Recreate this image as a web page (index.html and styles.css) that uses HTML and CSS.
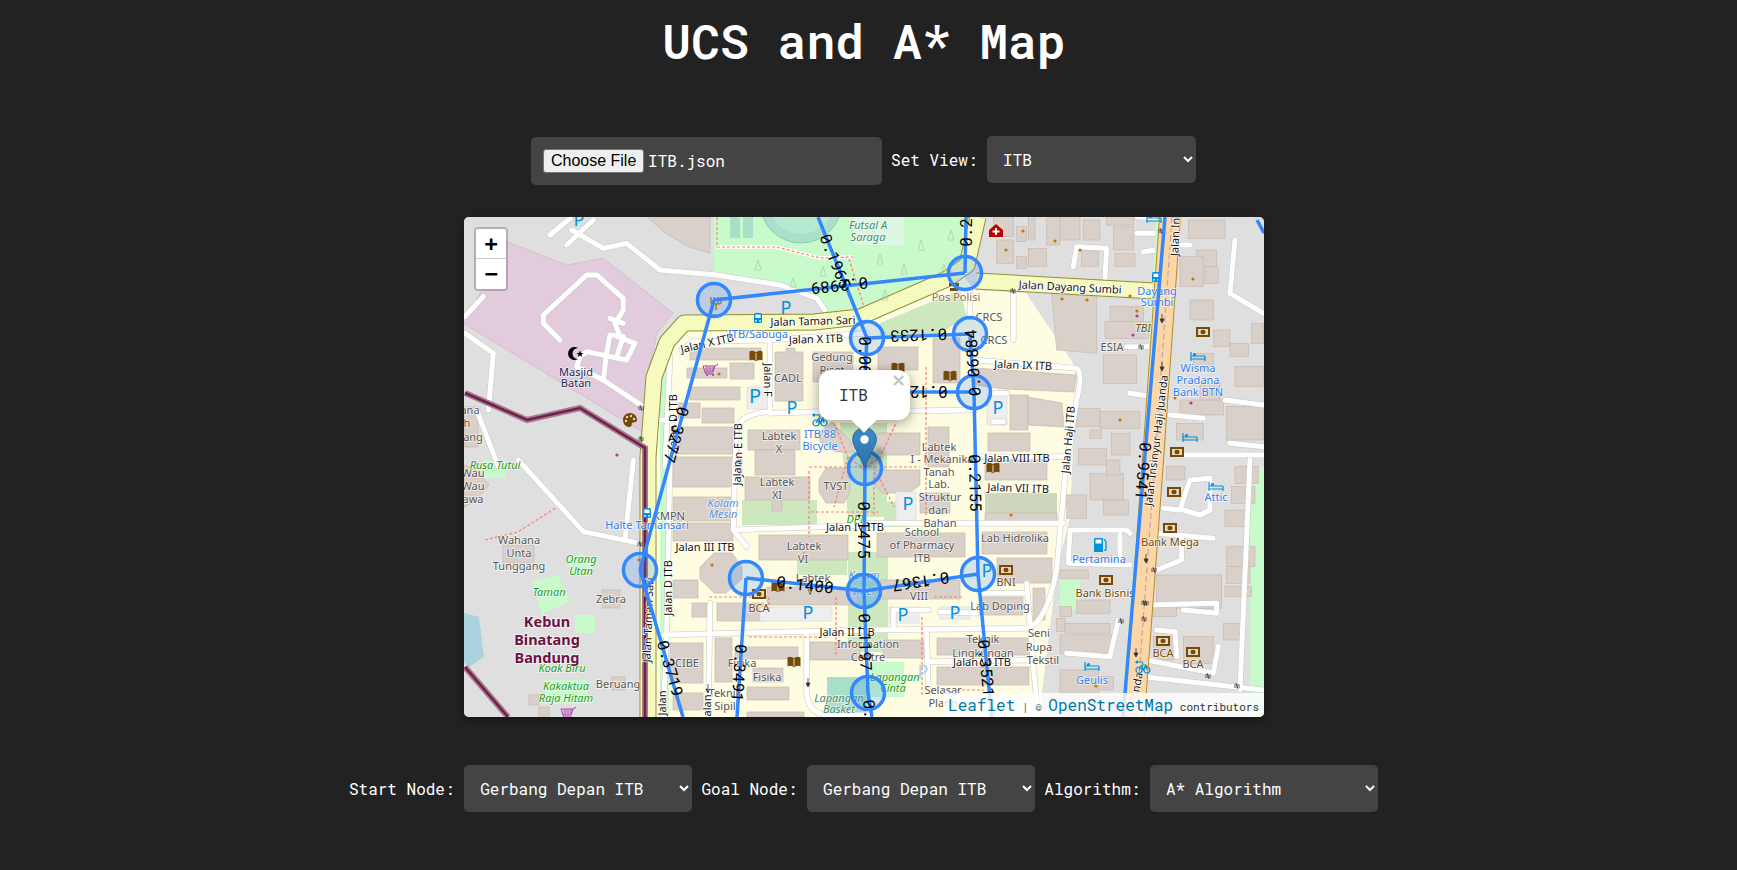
FILE: index.html
```html
<!DOCTYPE html>
<html lang="en">
<head>
<meta charset="utf-8">
<title>UCS and A* Map</title>
<link rel="stylesheet" href="styles.css">
</head>
<body>
<main class="page">
  <h1 class="title">UCS and A* Map</h1>

  <section class="row row-top">
    <div class="file-box"><button class="file-btn" type="button">Choose File</button><span class="file-name">ITB.json</span></div>
    <label class="lbl-field" for="view">Set View:</label>
    <select id="view" class="sel sel-view"><option>ITB</option><option>Alun-Alun</option></select>
  </section>

  <section class="map">
    <svg class="map-svg" viewBox="0 0 800 500" width="800" height="500" xmlns="http://www.w3.org/2000/svg">
      <defs>
        <g id="i-book"><path d="M-6.5 -4.5 C-4 -6 -1.5 -5 0 -3.5 C1.5 -5 4 -6 6.5 -4.5 V4.5 C4 3 1.5 4 0 5.5 C-1.5 4 -4 3 -6.5 4.5Z" class="ic-brown"/><path d="M0 -3V4.5" class="ic-line"/></g>
        <g id="i-bank"><rect x="-7" y="-5" width="14" height="10" class="ic-brown"/><rect x="-5" y="-3" width="10" height="6" class="ic-tan"/><ellipse rx="2.6" ry="2.2" class="ic-brown"/></g>
        <g id="i-bed"><path d="M-7 -4V5M7 0V5M-7 3H7M-7 -0H7" class="ic-bed"/><circle cx="-3.5" cy="-1.5" r="1.6" class="ic-blue"/></g>
        <g id="i-bus"><rect x="-4" y="-5" width="8" height="10" rx="1.5" class="ic-blue"/><rect x="-2.6" y="-3.4" width="5.2" height="3.4" class="ic-white"/><circle cx="-2" cy="2.8" r=".9" class="ic-white"/><circle cx="2" cy="2.8" r=".9" class="ic-white"/></g>
        <g id="i-bike"><circle cx="-4" cy="3" r="3" class="ic-bed"/><circle cx="4" cy="3" r="3" class="ic-bed"/><path d="M-4 3L-1 -2H3L4 3M-1 -2L0 3L3 -2M-4 -5H-1L0 -3" class="ic-bed"/><circle cx="-6" cy="-5" r="1.6" class="ic-blue"/></g>
        <g id="i-cart"><path d="M-7 -4H5L3 2H-5ZM-5 2L-4 4H4M5 -4L8 -6" class="ic-cart"/><path d="M-5 -2H4M-5 0H3.5M-3 -4V2M0 -4V2M3 -4V2" class="ic-cart-t"/><circle cx="-3" cy="5" r="1" class="ic-purple"/><circle cx="3" cy="5" r="1" class="ic-purple"/></g>
        <g id="i-pal"><path d="M0 -7C5 -7 7 -3 7 0C7 3 3 2 2 3C1 4 3 7 -1 7C-5 7 -7 3 -7 0C-7 -4 -4 -7 0 -7Z" class="ic-palette"/><circle cx="-3" cy="-3" r="1.2" class="ic-tan"/><circle cx="1" cy="-4" r="1.2" class="ic-tan"/><circle cx="4" cy="-1" r="1.2" class="ic-tan"/><circle cx="-4" cy="1" r="1.2" class="ic-tan"/></g>
        <g id="i-arrow"><path d="M0 -5V3M-2 0L0 4L2 0Z" class="ic-arrow"/></g>
        <g id="i-bar"><path d="M-3 -1H3M-3 1H3M-1 -3L1 3" class="ic-arrow"/></g>
        <g id="roads1" transform="translate(-4,-7) scale(.3333)">
          <path d="M15 370L100 430L85 600M50 600L115 770M15 320L70 260"/>
          <path d="M270 75L330 25M320 105L400 30M335 60L430 115L500 100L600 180L770 195L960 225L1070 265L1095 300"/>
          <path d="M300 390L250 340V315L380 195H410L490 265V300L465 340L480 380M450 325L490 340M460 375L525 400L500 450L380 425L360 440L350 470M430 510L440 430L450 375M490 380L470 440M350 470L430 510L550 590"/>
          <path d="M665 420L700 395L930 390L1220 370M930 390V610L1230 600M825 770L830 660Q840 610 930 605M630 440L615 770M600 630H640"/>
        </g>
        <g id="roads2" transform="translate(396,-7) scale(.3333)">
          <path d="M640 170L650 110L740 115L735 205M850 125L890 120M830 70H890M830 20L900 25"/>
          <path d="M460 245V390M345 450L650 475Q670 490 650 570L620 770M810 550L880 560M930 615L1030 625M800 410H875"/>
          <path d="M0 605L345 600M400 550H440M400 635H430M345 740H620M330 240V320"/>
          <path d="M1125 90L1110 250L1210 310M965 105H990M1095 570L1210 585M1110 700L1210 710M950 735H1210"/>
        </g>
        <g id="roads3" transform="translate(-4,243) scale(.3333)">
          <path d="M175 0L370 215L540 250M520 0L495 240M630 0L620 520L610 770M610 525L1230 510M825 0L820 210L1230 195M750 430L745 770M1040 525V700Q1045 760 1100 765H1230M820 210L860 260"/>
        </g>
        <g id="roads4" transform="translate(396,243) scale(.3333)">
          <path d="M0 190H610M0 510L500 505Q560 490 590 330L620 0"/>
          <path d="M200 520L205 690M500 370L520 620L535 770M360 400H490M100 500V450H205M240 455L350 460M205 605L520 600"/>
          <path d="M630 210H800L810 220M630 210L625 310L810 315M780 225V310M890 220L1060 235M965 225V300L890 330M910 145L960 150L990 60L1050 55V150L1020 165L970 150"/>
          <path d="M860 435L1070 430V460L970 450M620 580L750 590L775 480M890 510L945 515L950 590M860 600L1060 640L1075 560M850 650L1212 690M1170 0L1140 690"/>
        </g>
      </defs>

      <!-- land use -->
      <rect class="land" width="800" height="500"/>
      <polygon class="pink" points="0,107 43,25 103,48 139,41 209,96 193,116 183,160 179,215"/>
      <polygon class="water" points="0,396 15,400 20,440 5,450 0,445"/>
      <polygon class="green" points="250,0 510,0 500,45 478,62 400,95 360,95 353,83 316,68 253,58 250,55"/>
      <polygon class="campus" points="186,230 185,160 196,125 212,103 360,100 400,95 500,60 510,73 562,76 609,146 612,160 606,300 593,353 575,500 186,500"/>
      <rect class="green" x="196" y="130" width="9" height="370"/>
      <polygon class="meadow" points="416,106 496,73 503,100 470,120 416,120"/>
      <polygon class="meadow" points="376,206 423,206 423,300 384,300"/>
      <rect class="meadow" x="278" y="283" width="75" height="25"/>
      <rect class="meadow" x="333" y="343" width="50" height="15"/>
      <rect class="meadow" x="384" y="335" width="40" height="100"/>
      <rect class="meadow" x="420" y="285" width="25" height="25"/>
      <ellipse class="pond" cx="400" cy="374" rx="18" ry="15"/>
      <rect class="green" x="786" y="250" width="14" height="250"/>
      <rect class="green" x="596" y="363" width="20" height="30"/>
      <rect class="land-green" x="363" y="460" width="40" height="35"/>
      <polygon class="green" points="405,445 440,445 440,480 405,480"/>
      <polygon class="green" points="68,364 94,358 106,385 78,397"/>
      <polygon class="green" points="103,343 118,336 133,347 120,360 107,357"/>
      <rect class="green" x="111" y="398" width="20" height="18"/>
      <rect class="green" x="81" y="463" width="42" height="24"/>
      <rect class="green" x="20" y="243" width="22" height="18"/>
      <polygon class="pitch-soft" points="390,0 440,0 440,28 390,28"/>
      <circle class="track" cx="337" cy="-15" r="41"/>
      <circle class="field" cx="337" cy="-15" r="32"/>
      <rect class="land-green" x="266" y="0" width="10" height="21"/>
      <rect class="land-green" x="279" y="0" width="10" height="21"/>

      <!-- buildings -->
      <g class="bld">
        <polygon points="183,0 246,0 246,36 225,30 200,15"/>
        <polygon points="226,131 297,131 297,143 226,143"/>
        <rect x="223" y="151" width="40" height="10"/><rect x="266" y="146" width="24" height="16"/>
        <polygon points="311,135 322,135 322,131 331,131 331,135 339,135 339,184 311,184"/>
        <rect x="226" y="170" width="50" height="13"/><rect x="214" y="186" width="22" height="15"/><rect x="238" y="191" width="32" height="15"/>
        <rect x="209" y="210" width="60" height="27"/><rect x="209" y="240" width="60" height="30"/>
        <rect x="209" y="280" width="60" height="24"/><rect x="209" y="306" width="60" height="18"/>
        <rect x="349" y="135" width="40" height="30"/><rect x="414" y="130" width="40" height="23"/><rect x="469" y="121" width="27" height="45"/>
        <rect x="284" y="213" width="52" height="20"/><rect x="291" y="233" width="40" height="25"/>
        <rect x="281" y="260" width="65" height="23"/><rect x="308" y="283" width="10" height="11"/>
        <polygon points="356,215 368,205 385,222 391,235 372,235 356,225"/>
        <polygon points="362,251 380,251 386,262 386,275 380,286 362,286 355,275 355,262"/>
        <polygon points="413,216 456,216 456,238 420,238 413,232"/>
        <polygon points="411,253 456,253 456,268 445,276 418,276 411,268"/>
        <rect x="464" y="210" width="21" height="40"/><rect x="456" y="276" width="30" height="20"/>
        <rect x="524" y="216" width="42" height="18"/><rect x="521" y="243" width="62" height="20"/>
        <polygon points="511,151 612,158 610,175 540,172 511,168"/>
        <rect x="546" y="178" width="18" height="35"/><polygon points="564,180 598,186 600,210 564,208"/>
        <rect class="bld-g" x="521" y="276" width="72" height="20"/>
        <rect x="521" y="296" width="72" height="10"/><rect x="518" y="315" width="65" height="22"/><rect x="533" y="341" width="55" height="25"/>
        <rect x="516" y="380" width="43" height="18"/><rect x="569" y="371" width="12" height="32"/>
        <rect x="473" y="421" width="93" height="17"/><rect x="473" y="450" width="92" height="18"/>
        <rect x="413" y="316" width="88" height="24"/><rect x="416" y="363" width="80" height="19"/>
        <polygon points="236,350 250,336 268,336 278,350 278,362 262,376 250,376 236,362"/>
        <rect x="295" y="318" width="89" height="25"/><rect x="303" y="370" width="90" height="18"/>
        <rect x="209" y="363" width="25" height="18"/><rect x="228" y="386" width="15" height="14"/><rect x="253" y="386" width="47" height="18"/>
        <rect x="206" y="426" width="33" height="40"/><rect x="209" y="476" width="30" height="17"/>
        <rect x="251" y="421" width="17" height="44"/><rect x="271" y="430" width="63" height="12"/><rect x="289" y="451" width="30" height="14"/><rect x="283" y="470" width="42" height="13"/>
        <rect x="346" y="425" width="50" height="18"/><rect x="419" y="423" width="42" height="18"/><rect x="283" y="495" width="57" height="5"/>
        <rect x="39" y="328" width="31" height="18"/><rect x="138" y="373" width="18" height="18"/><rect x="148" y="460" width="13" height="13"/>
        <rect x="0" y="190" width="14" height="40"/>
        <polygon points="0,248 12,252 25,268 10,285 0,290"/>
        <rect x="65" y="478" width="10" height="10"/><rect x="75" y="490" width="10" height="10"/>
        <!-- east, top band -->
        <g transform="translate(396,-7) scale(.3333)">
          <rect x="470" y="50" width="30" height="45"/><rect x="505" y="20" width="20" height="70"/><rect x="400" y="20" width="60" height="60"/><rect x="410" y="90" width="50" height="70"/>
          <rect x="470" y="140" width="30" height="35"/><rect x="505" y="115" width="55" height="55"/><rect x="560" y="20" width="40" height="85"/><rect x="600" y="20" width="60" height="70"/>
          <rect x="670" y="30" width="50" height="60"/><rect x="760" y="50" width="60" height="70"/><rect x="665" y="120" width="50" height="50"/><rect x="765" y="130" width="60" height="40"/><rect x="740" y="20" width="80" height="25"/>
          <rect x="985" y="30" width="110" height="55"/><rect x="1010" y="120" width="60" height="50"/><rect x="960" y="140" width="70" height="90"/><rect x="1035" y="170" width="40" height="50"/>
          <polygon points="575,250 710,258 710,430 590,420"/>
          <rect x="750" y="290" width="60" height="45"/><rect x="815" y="290" width="35" height="50"/><rect x="735" y="335" width="140" height="50"/>
          <rect x="730" y="435" width="100" height="85"/><rect x="650" y="595" width="70" height="55"/><rect x="720" y="605" width="120" height="50"/><rect x="690" y="660" width="35" height="25"/><rect x="755" y="670" width="55" height="65"/><rect x="655" y="715" width="85" height="50"/>
          <rect x="990" y="270" width="70" height="60"/><rect x="1060" y="360" width="50" height="50"/><rect x="1110" y="400" width="55" height="40"/><rect x="1175" y="340" width="35" height="60"/><rect x="1000" y="430" width="60" height="50"/><rect x="1125" y="470" width="85" height="60"/>
          <rect x="960" y="570" width="130" height="45"/><rect x="1020" y="520" width="60" height="50"/><rect x="1100" y="590" width="110" height="100"/>
          <rect x="950" y="640" width="80" height="50"/>
        </g>
        <g transform="translate(396,243) scale(.3333)">
          <rect x="690" y="40" width="100" height="80"/><rect x="730" y="120" width="75" height="45"/><rect x="620" y="105" width="60" height="70"/><rect x="600" y="330" width="85" height="25"/>
          <rect x="650" y="420" width="100" height="40"/><rect x="600" y="440" width="35" height="30"/><rect x="590" y="475" width="25" height="40"/><rect x="615" y="490" width="135" height="30"/><rect x="600" y="525" width="155" height="55"/><rect x="600" y="630" width="115" height="70"/><rect x="715" y="650" width="45" height="40"/><rect x="740" y="0" width="40" height="45"/>
          <rect x="890" y="345" width="195" height="100"/><rect x="880" y="440" width="70" height="30"/><rect x="1095" y="150" width="70" height="50"/><rect x="1100" y="260" width="85" height="60"/><rect x="1100" y="320" width="70" height="50"/><rect x="1095" y="380" width="80" height="30"/><rect x="1090" y="490" width="60" height="50"/><rect x="970" y="530" width="90" height="80"/><rect x="880" y="530" width="60" height="70"/><rect x="1125" y="20" width="70" height="50"/><rect x="1115" y="80" width="70" height="50"/><rect x="920" y="20" width="55" height="40"/><rect x="850" y="680" width="10" height="10"/>
        </g>
      </g>
      <rect class="parking" x="296" y="390" width="72" height="14"/>
      <rect class="parking" x="283" y="170" width="22" height="22"/>
      <rect class="parking" x="425" y="390" width="30" height="16"/>
      <rect class="parking" x="476" y="390" width="30" height="12"/>
      <rect class="parking" x="432" y="275" width="20" height="30"/>
      <rect class="parking" x="523" y="178" width="20" height="30"/>

      <!-- roads -->
      <use href="#roads1" class="cas"/><use href="#roads2" class="cas"/><use href="#roads3" class="cas"/><use href="#roads4" class="cas"/>
      <use href="#roads1" class="way"/><use href="#roads2" class="way"/><use href="#roads3" class="way"/><use href="#roads4" class="way"/>
      <polyline class="sec-c" points="184,500 184,240 190,160 203,125 220,106 350,105 396,100 483,62 503,48 514,0"/>
      <polyline class="sec-c" points="512,64 690,74"/>
      <polyline class="sec" points="184,500 184,240 190,160 203,125 220,106 350,105 396,100 483,62 503,48 514,0"/>
      <polyline class="sec" points="512,64 690,74"/>
      <polyline class="verge" points="694,0 680,243 658,500"/>
      <polyline class="pri-c" points="706,0 689,243 670,500"/>
      <polyline class="pri" points="706,0 689,243 670,500"/>
      <polyline class="pri-d" points="708,0 691,243 672,500"/>
      <polyline class="bound-wide" points="1,176 63,203 116,191 181,231 181,500"/>
      <polyline class="bound" points="1,176 63,203 116,191 181,231 181,500"/>
      <polyline class="bound-wide" points="1,450 44,500"/>
      <polyline class="bound" points="1,450 44,500"/>

      <!-- footways -->
      <path class="fw-base" d="M253 30H312L356 41L389 40"/>
      <g class="fw">
        <path d="M253 0V30H312L356 41L389 40"/><path d="M385 42L400 90"/><path d="M21 323L54 315L93 290"/>
        <path d="M370 206L384 240L400 252L416 240L432 206"/><path d="M345 250H456M400 252V300M384 240L370 290M416 262L430 290"/>
        <path d="M462 150V300M345 254V320M415 295H345"/><path d="M285 420H365M340 330V345"/><path d="M458 400V480M470 380H500"/>
        <path d="M245 380H305L305 395M372 380V440"/><path d="M410 250V300"/>
        <path d="M478 473H520"/>
      </g>

      <!-- trees -->
      <g class="tree">
        <path d="M294 43l-3 10h6zM329 61l-3 9h6zM359 49l-3 10h6zM416 37l-3 10h6zM440 47l-3 10h6zM421 73l-3 10h6zM457 23l-3 10h6zM487 13l-3 10h6zM480 47l-3 10h6z"/>
      </g>

      <!-- dots -->
      <g class="dot-o"><circle cx="559" cy="14" r="1.6"/><circle cx="591" cy="24" r="1.6"/><circle cx="542" cy="33" r="1.6"/><circle cx="616" cy="33" r="1.6"/><circle cx="729" cy="62" r="1.6"/><circle cx="598" cy="82" r="1.6"/><circle cx="623" cy="83" r="1.6"/><circle cx="666" cy="79" r="1.6"/><circle cx="673" cy="94" r="1.6"/><circle cx="656" cy="203" r="1.6"/><circle cx="711" cy="181" r="1.6"/><circle cx="255" cy="157" r="1.6"/><circle cx="547" cy="298" r="1.6"/><circle cx="248" cy="348" r="1.6"/><circle cx="175" cy="343" r="1.6"/><circle cx="632" cy="469" r="1.6"/></g>
      <g class="dot-p"><circle cx="153" cy="238" r="1.6"/><circle cx="673" cy="99" r="1.6"/><circle cx="669" cy="118" r="1.6"/><circle cx="727" cy="186" r="1.6"/></g>

      <!-- icons -->
      <use href="#i-book" x="292" y="139"/><use href="#i-book" x="434" y="151"/><use href="#i-book" x="486" y="159"/><use href="#i-book" x="529" y="251"/><use href="#i-book" x="314" y="370"/><use href="#i-book" x="330" y="445"/>
      <use href="#i-bank" x="739" y="115"/><use href="#i-bank" x="713" y="235"/><use href="#i-bank" x="710" y="275"/><use href="#i-bank" x="706" y="311"/><use href="#i-bank" x="542" y="353"/><use href="#i-bank" x="642" y="363"/><use href="#i-bank" x="699" y="424"/><use href="#i-bank" x="729" y="435"/><use href="#i-bank" x="295" y="377"/>
      <use href="#i-bed" x="734" y="139"/><use href="#i-bed" x="726" y="220"/><use href="#i-bed" x="690" y="1"/><use href="#i-bed" x="628" y="449"/><use href="#i-bed" x="752" y="269"/>
      <use href="#i-bus" x="294" y="101"/><use href="#i-bus" x="692" y="60"/><use href="#i-bus" x="183" y="296"/>
      <use href="#i-bike" x="356" y="203"/><use href="#i-bike" x="679" y="450"/>
      <use href="#i-cart" x="246" y="153"/><use href="#i-cart" x="104" y="496"/>
      <use href="#i-pal" x="166" y="203"/>
      <use href="#i-arrow" x="698" y="102"/><use href="#i-arrow" x="698" y="150"/><use href="#i-arrow" x="682" y="342"/><use href="#i-arrow" x="672" y="436"/><use href="#i-arrow" x="244" y="472"/><use href="#i-arrow" x="344" y="466"/>
      <use href="#i-bar" x="549" y="74"/><use href="#i-bar" x="677" y="130"/><use href="#i-bar" x="697" y="14"/><use href="#i-bar" x="177" y="191"/><use href="#i-bar" x="177" y="222"/><use href="#i-bar" x="176" y="327"/><use href="#i-bar" x="680" y="386"/><use href="#i-bar" x="690" y="353"/><use href="#i-bar" x="682" y="386"/><use href="#i-bar" x="657" y="404"/><use href="#i-bar" x="680" y="402"/><use href="#i-bar" x="744" y="459"/><use href="#i-bar" x="773" y="469"/>
      <path class="ic-moon" d="M114 131a6.5 6.5 0 1 0 0 11a5.5 5.5 0 1 1 0 -11z"/>
      <polygon class="ic-moon" points="116,133.5 117,136 119.5,136 117.5,137.6 118.2,140 116,138.6 113.8,140 114.5,137.6 112.5,136 115,136"/>
      <g transform="translate(532,14)"><path class="ic-red" d="M-7 6V-1L0 -7L7 -1V6Z"/><path class="ic-white-s" d="M0 -3V4M-3.5 .5H3.5"/></g>
      <g transform="translate(252,86)"><path class="ic-fork" d="M-5 -6V-1Q-5 1 -2 1H2Q5 1 5 -1V-6M-2 -6V1M2 -6V1M0 1V7"/></g>
      <g transform="translate(635,328)"><rect class="ic-blue" x="-5" y="-7" width="9" height="14" rx="1"/><rect class="ic-white" x="-3.5" y="-5.5" width="6" height="4"/><path class="ic-fuel" d="M5 -6L7 -3V4Q7 6 5 5"/></g>
      <g class="ic-fork-s" transform="translate(490,71)"><path d="M-5 -5H5V-2H-5ZM-4 0H4V3H-4Z"/></g>

      <!-- labels -->
      <g class="t t-grey">
        <text x="324" y="165">CADL</text><text x="368" y="144">Gedung</text><text x="368" y="157">Riset</text><text x="315" y="223">Labtek</text><text x="315" y="236">X</text>
        <text x="6" y="197">ana</text><text x="3" y="210">h</text><text x="9" y="224">ang</text>
        <text x="525" y="104">CRCS</text><text x="530" y="127">CRCS</text><text x="648" y="134">ESIA</text>
        <text x="475" y="234">Labtek</text><text x="478" y="246">I - Mekanika</text><text x="475" y="259">Tanah</text><text x="475" y="271">Lab.</text><text x="476" y="284">Struktur</text><text x="474" y="297">dan</text><text x="476" y="310">Bahan</text>
        <text x="458" y="319">School</text><text x="458" y="332">of Pharmacy</text><text x="458" y="345">ITB</text><text x="551" y="325">Lab Hidrolika</text>
        <text x="448" y="370">Labtek</text><text x="455" y="383">VIII</text><text x="536" y="393">Lab Doping</text><text x="519" y="426">Teknik</text><text x="519" y="440">Lingkungan</text>
        <text x="575" y="420">Seni</text><text x="575" y="434">Rupa</text><text x="579" y="447">Tekstil</text><text x="479" y="477">Selasar</text><text x="479" y="490">Plano</text>
        <text x="9" y="260">Wau</text><text x="9" y="273">Wau</text><text x="9" y="286">awa</text><text x="55" y="327">Wahana</text><text x="55" y="340">Unta</text><text x="55" y="353">Tunggang</text>
        <text x="205" y="303">KMPN</text><text x="147" y="386">Zebra</text><text x="154" y="471">Beruang</text>
        <text x="340" y="333">Labtek</text><text x="339" y="346">VI</text><text x="349" y="365">Labtek</text><text x="346" y="378">V</text><text x="313" y="269">Labtek</text><text x="313" y="282">XI</text><text x="372" y="273">TVST</text>
        <text x="404" y="431">Information</text><text x="404" y="444">Centre</text><text x="223" y="450">CIBE</text><text x="278" y="450">Fisika</text><text x="303" y="464">Fisika</text><text x="261" y="480">Teknik</text><text x="261" y="493">Sipil</text>
      </g>
      <g class="t t-blk">
        <text transform="translate(349,108) rotate(-1.5)">Jalan Taman Sari</text>
        <text transform="translate(244,130) rotate(-13)">Jalan X ITB</text>
        <text transform="translate(352,126) rotate(-2)">Jalan X ITB</text>
        <text transform="translate(300,163) rotate(90)">Jalan F</text>
        <text transform="translate(213,205) rotate(-90)">Jalan D ITB</text>
        <text transform="translate(278,233) rotate(-90)">Jalan E ITB</text>
        <text transform="translate(715,20) rotate(-88)">Jalan In</text>
        <text transform="translate(606,74) rotate(3)">Jalan Dayang Sumbi</text>
        <text transform="translate(559,152) rotate(2)">Jalan IX ITB</text>
        <text transform="translate(696,224) rotate(-83)">Jalan Insinyur Haji Juanda</text>
        <text transform="translate(608,223) rotate(-85)">Jalan Haji ITB</text>
        <text x="553" y="245">Jalan VIII ITB</text>
        <text transform="translate(554,275) rotate(2)">Jalan VII ITB</text>
        <text x="518" y="449">Jalan VI ITB</text>
        <text transform="translate(677,466) rotate(-80)">nda</text>
        <text x="241" y="334">Jalan III ITB</text>
        <text transform="translate(208,371) rotate(-90)">Jalan D ITB</text>
        <text transform="translate(188,403) rotate(-88)">Jalan Taman Sari</text>
        <text x="391" y="314">Jalan IV ITB</text><text x="383" y="419">Jalan II ITB</text>
        <text transform="translate(202,486) rotate(-90)">Jalan</text><text transform="translate(247,490) rotate(-90)">Jalan</text><text transform="translate(277,256) rotate(-90)">Jalan</text>
      </g>
      <g class="t t-blue">
        <text x="294" y="121">ITB/Sabuga</text><text x="356" y="221">ITB'88</text><text x="356" y="233">Bicycle</text><text x="693" y="78">Dayang</text><text x="693" y="89">Sumbi</text>
        <text x="734" y="155">Wisma</text><text x="734" y="167">Pradana</text><text x="734" y="179">Bank BTN</text><text x="635" y="346">Pertamina</text><text x="752" y="284">Attic</text><text x="628" y="467">Geulis</text><text x="183" y="312">Halte Tamansari</text>
      </g>
      <g class="t t-brown">
        <text x="492" y="84" class="t-pol">Pos Polisi</text><text x="542" y="369">BNI</text><text x="706" y="329">Bank Mega</text><text x="641" y="380">Bank Bisnis</text><text x="699" y="440">BCA</text><text x="729" y="451">BCA</text><text x="295" y="395">BCA</text>
      </g>
      <g class="t t-green">
        <text x="404" y="12" class="t-teal">Futsal A</text><text x="404" y="24" class="t-teal">Saraga</text><text x="31" y="252">Rusa Tutul</text><text x="117" y="346">Orang</text><text x="117" y="358">Utan</text><text x="85" y="379">Taman</text><text x="98" y="455">Koak Biru</text><text x="102" y="473">Kakaktua</text><text x="102" y="485">Raja Hitam</text><text x="431" y="464">Lapangan</text><text x="429" y="475">Cinta</text><text x="391" y="306">DPI</text><text x="375" y="485" class="t-teal">Lapangan</text><text x="375" y="496" class="t-teal">Basket</text>
      </g>
      <g class="t t-ital-blue"><text x="259" y="290">Kolam</text><text x="259" y="301">Mesin</text><text x="400" y="362">Kolam</text><text x="400" y="378">Intel</text></g>
      <text x="112" y="159" class="t t-navy">Masjid</text><text x="112" y="170" class="t t-navy">Batan</text>
      <text x="679" y="115" class="t t-olive">TBI</text>
      <g class="t t-zoo"><text x="83" y="410">Kebun</text><text x="83" y="428">Binatang</text><text x="83" y="446">Bandung</text></g>
      <g class="t-p">
        <text x="115" y="9">P</text><text x="322" y="97">P</text><text x="291" y="186" class="t-p-lg">P</text><text x="328" y="197">P</text><text x="534" y="197">P</text><text x="444" y="293">P</text><text x="344" y="402">P</text><text x="439" y="404">P</text><text x="491" y="402">P</text><text x="523" y="360">P</text><text x="459" y="461" class="t-p-pale">P</text>
      </g>

      <!-- graph overlay -->
      <g class="edge">
        <path d="M250 83L501 56M502 0L501 56M354 0L403 121M403 121L506 117M506 117L510 175M403 121L400 175M400 175L510 175M400 175L401 251M401 251L400 374M510 175L514 357M250 83L176 353M176 353L219 500M282 361L400 374M400 374L514 357M282 361L273 500M400 374L404 476M404 476L408 500M514 357L532 545M701 0L659 500M793 3L800 16"/>
      </g>
      <g class="node">
        <circle cx="250" cy="83" r="16.5"/><circle cx="501" cy="56" r="16.5"/><circle cx="403" cy="121" r="16.5"/><circle cx="506" cy="117" r="16.5"/><circle cx="510" cy="175" r="16.5"/><circle cx="400" cy="175" r="16.5"/><circle cx="401" cy="251" r="16.5"/><circle cx="176" cy="353" r="16.5"/><circle cx="282" cy="361" r="16.5"/><circle cx="400" cy="374" r="16.5"/><circle cx="514" cy="357" r="16.5"/><circle cx="404" cy="476" r="16.5"/>
      </g>
      <g class="w">
        <text transform="translate(375.5,69.5) rotate(173.9)">0.2989</text>
        <text transform="translate(501,1) rotate(-90)">0.2471</text>
        <text transform="translate(372,44) rotate(68)">0.1965</text>
        <text transform="translate(213,218) rotate(105.3)">0.3277</text>
        <text transform="translate(207,451) rotate(73.8)">0.3719</text>
        <text transform="translate(341,367) rotate(6.3)">0.1400</text>
        <text transform="translate(457,365.5) rotate(171.5)">0.1367</text>
        <text transform="translate(276,456) rotate(93.8)">0.3491</text>
        <text transform="translate(400.5,313) rotate(90)">0.1475</text>
        <text transform="translate(402,425) rotate(87.8)">0.1197</text>
        <text transform="translate(408,511) rotate(85)">0.0812</text>
        <text transform="translate(401.5,148) rotate(90)">0.0634</text>
        <text transform="translate(400.5,213) rotate(90)">0.0705</text>
        <text transform="translate(455,175) rotate(180)">0.1254</text>
        <text transform="translate(454.5,119) rotate(177.8)">0.1233</text>
        <text transform="translate(508,146) rotate(-94)">0.06884</text>
        <text transform="translate(512,266) rotate(88.7)">0.2155</text>
        <text transform="translate(523,451) rotate(84.5)">0.3521</text>
        <text transform="translate(680,254) rotate(94.8)">0.9541</text>
      </g>
    </svg>

    <div class="zoom">
      <button class="zoom-btn" type="button">+</button>
      <button class="zoom-btn" type="button">&#8722;</button>
    </div>

    <svg class="pin" width="45" height="44" viewBox="0 0 45 44" xmlns="http://www.w3.org/2000/svg">
      <defs><linearGradient id="pin-fill" x1="0" y1="0" x2="0" y2="1"><stop offset="0" stop-color="#3f8fc9"/><stop offset="1" stop-color="#2a6fa8"/></linearGradient></defs>
      <ellipse class="pin-shadow" cx="21" cy="31" rx="13" ry="7" transform="rotate(-40 21 31)"/>
      <path d="M12.5 .7C5.8 .7 .7 6 .7 12.5C.7 19 6.5 25 12.5 40.5C18.5 25 24.3 19 24.3 12.5C24.3 6 19.2 .7 12.5 .7Z" fill="url(#pin-fill)" stroke="#2b6595"/>
      <circle cx="12.5" cy="12.5" r="4.2" fill="#fff"/>
    </svg>

    <div class="popup">
      <span class="popup-text">ITB</span>
      <span class="popup-x">&#215;</span>
      <i class="popup-tip"></i>
    </div>

    <div class="attrib"><a class="attrib-link">Leaflet</a> <span class="attrib-sep">|</span> <span class="attrib-sm">&#169;</span> <a class="attrib-link">OpenStreetMap</a> <span class="attrib-sm">contributors</span></div>
  </section>

  <section class="row row-bottom">
    <label class="lbl-field" for="start">Start Node:</label>
    <select id="start" class="sel sel-node"><option>Gerbang Depan ITB</option></select>
    <label class="lbl-field" for="goal">Goal Node:</label>
    <select id="goal" class="sel sel-node"><option>Gerbang Depan ITB</option></select>
    <label class="lbl-field" for="algo">Algorithm:</label>
    <select id="algo" class="sel sel-node"><option>A* Algorithm</option></select>
  </section>
</main>
</body>
</html>
```

FILE: styles.css
```css
* { box-sizing: border-box; }
html, body { margin: 0; padding: 0; height: 100%; overflow: hidden; }
body {
  background: #222;
  color: #fff;
  font-family: "Roboto Mono", "DejaVu Sans Mono", monospace;
  font-size: 16px;
}
.page {
  width: 1728px;
  display: flex;
  flex-direction: column;
  align-items: center;
}
.title {
  margin: 13px 0 68px;
  font-size: 48px;
  line-height: 56px;
  font-weight: 600;
  text-align: center;
}
.row { display: flex; align-items: center; gap: 9.6px; margin-right: 1.4px; }
.row-top { height: 48px; margin-bottom: 32px; }
.row-top .lbl-field, .row-top .sel { margin-bottom: 3px; }
.row-bottom { margin-top: 48px; }
.lbl-field { white-space: pre; }
.file-box {
  width: 350.4px;
  height: 48px;
  background: #444;
  border-radius: 5px;
  padding: 0 12px;
  display: flex;
  align-items: center;
  gap: 4px;
}
.file-btn {
  width: 101px;
  height: 24px;
  padding: 0;
  background: #efefef;
  border: 1px solid #767676;
  border-radius: 3px;
  color: #000;
  font: 16px "Liberation Sans", Arial, sans-serif;
}
.file-name { color: #fff; margin-bottom: 2px; }
.sel {
  height: 47px;
  padding: 0 12px;
  border: 0;
  border-radius: 5px;
  background-color: #444;
  color: #fff;
  font: inherit;
}
.sel-view { width: 208.4px; }
.sel-node { width: 227.7px; }

.map {
  position: relative;
  width: 800px;
  height: 500px;
  border-radius: 5px;
  overflow: hidden;
  box-shadow: 0 4px 8px rgba(0, 0, 0, .35);
  background: #e0dfdf;
}
.map-svg { display: block; }

/* land use */
.land { fill: #e0dfdf; }
.pink { fill: #e2cbdd; stroke: #c9b2c4; stroke-width: .6; }
.water { fill: #aad3df; }
.green { fill: #c8facc; }
.pitch-soft { fill: #dcf7e2; }
.campus { fill: #fffde1; }
.meadow { fill: #cde8bf; }
.pond { fill: #a6d9cf; }
.land-green { fill: #a8dfc9; }
.track { fill: #aae0cb; stroke: #88cdb0; stroke-width: 1; }
.field { fill: #b7e8d2; }
.parking { fill: #eeeeee; stroke: #d8d8d8; stroke-width: .6; }
.bld { fill: #d9d0c9; stroke: #c6b9ae; stroke-width: .7; }
.bld-g { fill: #ced6bb; stroke: none; }
.bld g { stroke-width: 2; }

/* roads */
.cas { fill: none; stroke: #c8c6c4; stroke-width: 18; stroke-linecap: round; stroke-linejoin: round; }
.way { fill: none; stroke: #fff; stroke-width: 15; stroke-linecap: round; stroke-linejoin: round; }
.sec-c { fill: none; stroke: #8f9036; stroke-width: 17; stroke-linejoin: round; }
.sec { fill: none; stroke: #f7fabf; stroke-width: 15; stroke-linejoin: round; }
.verge { fill: none; stroke: #c8facc; stroke-width: 3; }
.pri-c { fill: none; stroke: #b58a2d; stroke-width: 22; }
.pri { fill: none; stroke: #fcd6a4; stroke-width: 20; }
.pri-d { fill: none; stroke: #c4a4ad; stroke-width: 1.2; stroke-dasharray: 6 3; }
.bound-wide { fill: none; stroke: #a57a90; stroke-width: 6; }
.bound { fill: none; stroke: #6f1f48; stroke-width: 2.5; }
.fw-base { fill: none; stroke: #fff; stroke-width: 3.5; }
.fw { fill: none; stroke: #fa8072; stroke-width: 1.2; stroke-dasharray: 3 2; }
.tree { fill: none; stroke: #a4d6a8; stroke-width: .8; }
.dot-o { fill: #c77400; }
.dot-p { fill: #ac39ac; }

/* icons */
.ic-brown { fill: #734a08; }
.ic-tan { fill: #e6d8bd; }
.ic-line { fill: none; stroke: #e6d8bd; stroke-width: 1; }
.ic-blue { fill: #0092da; }
.ic-white { fill: #fff; }
.ic-bed { fill: none; stroke: #0092da; stroke-width: 1.2; }
.ic-fuel { fill: none; stroke: #0092da; stroke-width: 1.3; }
.ic-cart { fill: none; stroke: #ac39ac; stroke-width: 1; }
.ic-cart-t { fill: none; stroke: #ac39ac; stroke-width: .6; }
.ic-purple { fill: #ac39ac; }
.ic-palette { fill: #734a08; }
.ic-moon { fill: #000; }
.ic-red { fill: #bf0000; }
.ic-white-s { fill: none; stroke: #fff; stroke-width: 2; }
.ic-fork { fill: none; stroke: #c77400; stroke-width: 1.5; }
.ic-fork-s { fill: #734a08; }
.ic-arrow { fill: #333; stroke: #333; stroke-width: .8; }

/* tile labels */
.t {
  font-family: "Noto Sans", "Open Sans", sans-serif;
  font-size: 11px;
  text-anchor: middle;
  paint-order: stroke;
  stroke: rgba(255, 255, 255, .7);
  stroke-width: 1.5px;
}
.t-grey { fill: #555; }
.t-blk { fill: #111; stroke: #fff; }
.t-blue { fill: #2f7df0; }
.t-brown { fill: #734a08; }
.t-pol { fill: #8d6b4d; }
.t-green { fill: #229c22; font-style: italic; }
.t-teal { fill: #3c8c74; }
.t-ital-blue { fill: #5b8fd6; font-style: italic; }
.t-navy { fill: #252558; }
.t-olive { fill: #55551a; font-style: italic; }
.t-zoo { fill: #6c1240; font-size: 14.5px; font-weight: 700; }
.t-p { fill: #0092da; font: 400 18px "Noto Sans", sans-serif; text-anchor: middle; }
.t-p-lg { font-size: 20px; }
.t-p-pale { fill: #a8d4ec; }

/* graph */
.edge { fill: none; stroke: #3388ff; stroke-width: 3.5; stroke-linejoin: round; }
.node { fill: rgba(51, 136, 255, .2); stroke: #3388ff; stroke-width: 3.5; }
.w {
  fill: #000;
  font-family: "Roboto Mono", "DejaVu Sans Mono", monospace;
  font-size: 16px;
  text-anchor: middle;
  dominant-baseline: central;
}

/* leaflet controls */
.zoom {
  position: absolute;
  left: 10px;
  top: 10px;
  width: 34px;
  border: 2px solid rgba(0, 0, 0, .2);
  border-radius: 4px;
  background-clip: padding-box;
  display: flex;
  flex-direction: column;
}
.zoom-btn {
  width: 30px;
  height: 30px;
  padding: 0;
  background: #fff;
  border: 0;
  border-bottom: 1px solid #ccc;
  color: #000;
  font: 700 22px/30px "DejaVu Sans Mono", monospace;
}
.zoom-btn:first-child { border-radius: 2px 2px 0 0; }
.zoom-btn:last-child { border-bottom: 0; border-radius: 0 0 2px 2px; }

.pin { position: absolute; left: 388px; top: 210px; }
.pin-shadow { fill: rgba(0, 0, 0, .3); filter: blur(2.5px); }
.popup {
  position: absolute;
  left: 355px;
  top: 153px;
  width: 91px;
  height: 50px;
  background: #fff;
  border-radius: 12px;
  box-shadow: 0 3px 14px rgba(0, 0, 0, .4);
}
.popup-text {
  position: absolute;
  left: 20px;
  top: 14px;
  color: #333;
  font-size: 16px;
  line-height: 21px;
}
.popup-x {
  position: absolute;
  right: 4px;
  top: 1px;
  color: #c3c3c3;
  font: 700 18px/18px "DejaVu Sans", sans-serif;
}
.popup-tip {
  position: absolute;
  left: 36px;
  top: 41px;
  width: 18px;
  height: 18px;
  background: #fff;
  transform: rotate(45deg);
}
.attrib {
  position: absolute;
  right: 0;
  bottom: 0;
  height: 24px;
  width: 321px;
  padding: 0 5px;
  background: rgba(255, 255, 255, .8);
  color: #333;
  font-size: 11px;
  line-height: 24px;
  white-space: nowrap;
  text-align: right;
}
.attrib-link { color: #0078a8; font-size: 16px; }
.attrib-sep { color: #555; }
.attrib-sm { font-size: 11px; }
```
